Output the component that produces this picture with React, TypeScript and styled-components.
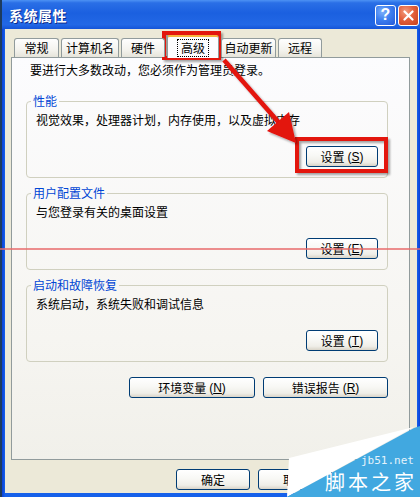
import styled, { createGlobalStyle } from 'styled-components';

const GlobalStyle = createGlobalStyle`
  html, body {
    margin: 0;
    padding: 0;
  }

  body {
    width: 420px;
    height: 497px;
    overflow: hidden;
    background: #1d3b5e;
    font-family: "Noto Sans CJK SC", "Liberation Sans", sans-serif;
    font-size: 12px;
    color: #000;
  }
`;

const tabs = [
  { label: '常规', width: 45 },
  { label: '计算机名', width: 58 },
  { label: '硬件', width: 44 },
  { label: '高级', width: 52, active: true },
  { label: '自动更新', width: 55 },
  { label: '远程', width: 44 },
];

const groups = [
  { title: '性能', desc: '视觉效果，处理器计划，内存使用，以及虚拟内存', key: 'S' },
  { title: '用户配置文件', desc: '与您登录有关的桌面设置', key: 'E' },
  { title: '启动和故障恢复', desc: '系统启动，系统失败和调试信息', key: 'T' },
];

function Mnemonic({ k }: { k: string }) {
  return (
    <Key>
      (<u>{k}</u>)
    </Key>
  );
}

export default function App() {
  return (
    <Page>
      <GlobalStyle />
      <Window>
        <TitleBar>
          <Title>系统属性</Title>
          <TitleButtons>
            <TitleButton $variant="help">?</TitleButton>
            <TitleButton $variant="close">
              <svg width="11" height="11" viewBox="0 0 11 11">
                <path d="M1.5 1.5 L9.5 9.5 M9.5 1.5 L1.5 9.5" stroke="#fff" strokeWidth="2.2" strokeLinecap="round" />
              </svg>
            </TitleButton>
          </TitleButtons>
        </TitleBar>

        <Body>
          <TabStrip>
            {tabs.map((t) => (
              <Tab key={t.label} $w={t.width} $active={t.active}>
                {t.active ? <Focus>{t.label}</Focus> : t.label}
              </Tab>
            ))}
          </TabStrip>

          <Panel>
            <Intro>要进行大多数改动，您必须作为管理员登录。</Intro>

            {groups.map((g, i) => (
              <GroupBox key={g.title} $first={i === 0}>
                <Legend>{g.title}</Legend>
                <Desc>{g.desc}</Desc>
                <ButtonRow>
                  <XpButton $w={72}>
                    设置<Mnemonic k={g.key} />
                  </XpButton>
                </ButtonRow>
              </GroupBox>
            ))}

            <ExtraRow>
              <XpButton $w={126}>
                环境变量<Mnemonic k="N" />
              </XpButton>
              <XpButton $w={125}>
                错误报告<Mnemonic k="R" />
              </XpButton>
            </ExtraRow>
          </Panel>

          {/* the third button (应用) sits under the watermark and is not visible */}
          <Footer>
            <XpButton $w={74}>确定</XpButton>
            <XpButton $w={74}>取消</XpButton>
          </Footer>
        </Body>
      </Window>

      <Overlay width="420" height="497" viewBox="0 0 420 497">
        <defs>
          <filter id="shade" x="-20%" y="-20%" width="140%" height="140%">
            <feDropShadow dx="2" dy="2" stdDeviation="1.2" floodColor="#000" floodOpacity="0.35" />
          </filter>
        </defs>
        <line x1="0" y1="249" x2="420" y2="249" stroke="#e86a6a" strokeWidth="1.6" />
        <g filter="url(#shade)" fill="none" stroke="#e3120e" strokeWidth="4">
          <rect x="164" y="33" width="55" height="25" />
          <rect x="297" y="139" width="89" height="32" />
        </g>
        <g filter="url(#shade)">
          <line x1="224" y1="60" x2="281" y2="125" stroke="#e3120e" strokeWidth="4.5" />
          <polygon points="267,131 289,112 296,143" fill="#e3120e" />
        </g>
        <polygon points="289,458 414,427 287,497" fill="#ffffff" />
        <polygon points="287,497 414,428 420,426 420,497" fill="#41a8e0" />
      </Overlay>
      <WatermarkUrl>jb51.net</WatermarkUrl>
      <WatermarkName>脚本之家</WatermarkName>
    </Page>
  );
}

const Page = styled.div`
  position: relative;
  width: 420px;
  height: 497px;
`;

const Window = styled.div`
  display: flex;
  flex-direction: column;
  width: 418px;
  height: 497px;
  margin-left: 2px;
  box-sizing: border-box;
  background: linear-gradient(90deg, #0a3fd6 0px, #1560ea 3px, #1560ea 415px, #0a3fd6 418px);
`;

const TitleBar = styled.div`
  display: flex;
  align-items: center;
  justify-content: space-between;
  height: 29px;
  flex-shrink: 0;
  padding: 0 1px 0 7px;
  background: linear-gradient(180deg, #4d92f4 0%, #2a6fe6 10%, #1b60e0 45%, #2268e6 85%, #1454d8 100%);
`;

const Title = styled.span`
  font-size: 14px;
  font-weight: bold;
  color: #fff;
  letter-spacing: 0.5px;
  text-shadow: 1px 1px 0 #0c2a8c;
`;

const TitleButtons = styled.div`
  display: flex;
  gap: 2px;
  margin-top: 1px;
`;

const TitleButton = styled.div<{ $variant: 'help' | 'close' }>`
  display: flex;
  align-items: center;
  justify-content: center;
  width: 21px;
  height: 21px;
  box-sizing: border-box;
  border: 1px solid #fff;
  border-radius: 3px;
  font-family: "Liberation Sans", sans-serif;
  font-size: 16px;
  font-weight: bold;
  color: #fff;
  background: ${({ $variant }) =>
    $variant === 'close'
      ? 'radial-gradient(circle at 35% 30%, #f39c7e 0%, #e3603c 45%, #c8401c 100%)'
      : 'radial-gradient(circle at 35% 30%, #7fb0fa 0%, #3d7ff0 45%, #2358d8 100%)'};
`;

const Body = styled.div`
  display: flex;
  flex-direction: column;
  flex: 1;
  margin: 0 3px 4px 3px;
  padding: 6px 7px 0 6px;
  background: #ece9d8;
`;

const TabStrip = styled.div`
  position: relative;
  z-index: 1;
  display: flex;
  align-items: flex-end;
  gap: 2px;
  height: 22px;
  padding-left: 3px;
`;

const Tab = styled.div<{ $w: number; $active?: boolean }>`
  display: flex;
  align-items: center;
  justify-content: center;
  width: ${({ $w }) => $w}px;
  height: ${({ $active }) => ($active ? 23 : 19)}px;
  margin-bottom: ${({ $active }) => ($active ? -1 : 0)}px;
  box-sizing: border-box;
  border: 1px solid #919b9c;
  border-bottom: none;
  border-top: ${({ $active }) => ($active ? '2px solid #f7b33d' : '1px solid #919b9c')};
  border-radius: 3px 3px 0 0;
  background: ${({ $active }) => ($active ? '#fcfcfe' : 'linear-gradient(180deg, #fefefe 0%, #f4f3ee 60%, #e6e4da 100%)')};
  line-height: 14px;
`;

const Focus = styled.span`
  padding: 1px 3px;
  border: 1px dotted #000;
`;

const Panel = styled.div`
  display: flex;
  flex-direction: column;
  height: 403px;
  box-sizing: border-box;
  padding: 5px 21px 0 14px;
  border: 1px solid #919b9c;
  background: linear-gradient(180deg, #fcfcfe 0%, #f6f5f1 70%, #f1f0ea 100%);
`;

const Intro = styled.p`
  margin: 0;
  padding-left: 4px;
  line-height: 14px;
`;

const GroupBox = styled.fieldset<{ $first?: boolean }>`
  min-width: 0;
  margin: ${({ $first }) => ($first ? 17 : 8)}px 0 0 0;
  padding: 0 9px 10px 9px;
  border: 1px solid #d0d0bf;
  border-radius: 4px;
`;

const Legend = styled.legend`
  margin-left: -5px;
  padding: 0 2px;
  line-height: 14px;
  color: #0046d5;
`;

const Desc = styled.p`
  margin: 5px 0 0 0;
  line-height: 14px;
`;

const ButtonRow = styled.div`
  display: flex;
  justify-content: flex-end;
  margin-top: 19px;
`;

const ExtraRow = styled.div`
  display: flex;
  justify-content: flex-end;
  gap: 8px;
  margin-top: 15px;
`;

const Footer = styled.div`
  display: flex;
  gap: 8px;
  margin-top: 9px;
  padding-left: 165px;
`;

const XpButton = styled.button<{ $w: number }>`
  display: flex;
  align-items: center;
  justify-content: center;
  width: ${({ $w }) => $w}px;
  height: 21px;
  padding: 0;
  border: 1px solid #003c74;
  border-radius: 3px;
  background: linear-gradient(180deg, #ffffff 0%, #f8f8f5 45%, #efeee8 80%, #d9d4c8 100%);
  font-family: inherit;
  font-size: 12px;
  line-height: 14px;
  color: #000;
`;

const Key = styled.span`
  margin-left: 3px;
  font-family: "Liberation Sans", sans-serif;
  font-size: 12px;
`;

const Overlay = styled.svg`
  position: absolute;
  top: 0;
  left: 0;
  pointer-events: none;
`;

const WatermarkUrl = styled.span`
  position: absolute;
  left: 361px;
  top: 455px;
  font-family: "DejaVu Sans Mono", monospace;
  font-size: 11px;
  line-height: 12px;
  color: #e6f3fb;
`;

const WatermarkName = styled.span`
  position: absolute;
  left: 325px;
  top: 470px;
  font-size: 20px;
  line-height: 24px;
  letter-spacing: 3px;
  color: #fff;
  white-space: nowrap;
`;
